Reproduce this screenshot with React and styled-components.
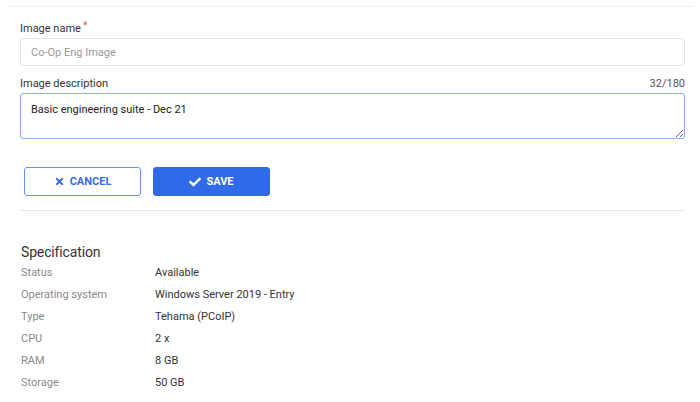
import styled, { createGlobalStyle } from "styled-components"
import { FaTimes, FaCheck } from "react-icons/fa"

const GlobalStyle = createGlobalStyle`
    body {
        margin: 0;
        background: #fff;
        font-family: Roboto, "Liberation Sans", sans-serif;
        color: #333;
    }
`

const specs = [
    ["Status", "Available"],
    ["Operating system", "Windows Server 2019 - Entry"],
    ["Type", "Tehama (PCoIP)"],
    ["CPU", "2 x"],
    ["RAM", "8 GB"],
    ["Storage", "50 GB"],
]

const App = () => {
    return (
        <>
            <GlobalStyle />
            <Page>
                <TopRule />
                <Content>
                    <Field>
                        <LabelRow>
                            <Label>Image name<Required>*</Required></Label>
                        </LabelRow>
                        <Input placeholder="Co-Op Eng Image" />
                    </Field>

                    <Field $gap={10}>
                        <LabelRow>
                            <Label>Image description</Label>
                            <Counter>32/180</Counter>
                        </LabelRow>
                        <TextArea defaultValue="Basic engineering suite - Dec 21" />
                    </Field>

                    <Actions>
                        <Button>
                            <FaTimes size={11} />
                            CANCEL
                        </Button>
                        <Button $primary>
                            <FaCheck size={12} />
                            SAVE
                        </Button>
                    </Actions>

                    <Divider />

                    <SectionTitle>Specification</SectionTitle>
                    <SpecList>
                        {specs.map(([name, value]) => (
                            <SpecRow key={name}>
                                <SpecName>{name}</SpecName>
                                <SpecValue>{value}</SpecValue>
                            </SpecRow>
                        ))}
                    </SpecList>
                </Content>
            </Page>
        </>
    )
}

export default App

const Page = styled.div`
    width: 700px;
    height: 402px;
    padding-top: 6px;
    box-sizing: border-box;
    overflow: hidden;
`

const TopRule = styled.div`
    margin: 0 7px;
    border-top: 1px solid #efefef;
`

const Content = styled.div`
    padding: 0 15px 0 20px;
`

const Field = styled.div`
    margin-top: ${p => p.$gap ?? 14}px;
`

const LabelRow = styled.div`
    display: flex;
    justify-content: space-between;
    align-items: center;
    height: 14px;
    margin-bottom: 3px;
`

const Label = styled.span`
    font-size: 11px;
    color: #333;
`

const Required = styled.span`
    color: #d9534f;
    margin-left: 2px;
    position: relative;
    top: -3px;
    font-size: 10px;
`

const Counter = styled.span`
    font-size: 11px;
    color: #555;
`

const Input = styled.input`
    display: block;
    width: 100%;
    box-sizing: border-box;
    height: 28px;
    border: 1px solid #e4e4e4;
    border-radius: 3px;
    padding: 0 10px;
    font-family: inherit;
    font-size: 11px;
    color: #333;
    outline: none;

    &::placeholder {
        color: #9a9a9a;
    }
`

const TextArea = styled.textarea`
    display: block;
    width: 100%;
    box-sizing: border-box;
    height: 46px;
    border: 1px solid #8eaaf3;
    border-radius: 3px;
    padding: 9px 10px;
    font-family: inherit;
    font-size: 11px;
    color: #222;
    resize: vertical;
    outline: none;
`

const Actions = styled.div`
    display: flex;
    gap: 12px;
    margin-top: 28px;
    padding-left: 4px;
`

const Button = styled.button`
    display: flex;
    align-items: center;
    justify-content: center;
    gap: 5px;
    width: 117px;
    height: 29px;
    box-sizing: border-box;
    border-radius: 3px;
    border: 1px solid ${p => p.$primary ? "#2f6ae8" : "#6b92f0"};
    background: ${p => p.$primary ? "#2f6ae8" : "#fff"};
    color: ${p => p.$primary ? "#fff" : "#3a6ded"};
    font-family: Roboto, "Liberation Sans", sans-serif;
    font-weight: 700;
    font-size: 11px;
    cursor: pointer;
`

const Divider = styled.div`
    margin-top: 14px;
    border-top: 1px solid #e8e8e8;
`

const SectionTitle = styled.h2`
    margin: 32px 0 0 1px;
    font-size: 14px;
    font-weight: 400;
    line-height: 18px;
    letter-spacing: -0.15px;
    color: #333;
`

const SpecList = styled.div`
    margin-left: 1px;
`

const SpecRow = styled.div`
    display: flex;
    align-items: center;
    height: 22px;
    font-size: 11px;
`

const SpecName = styled.span`
    width: 134px;
    color: #8a8a8a;
`

const SpecValue = styled.span`
    color: #333;
`
